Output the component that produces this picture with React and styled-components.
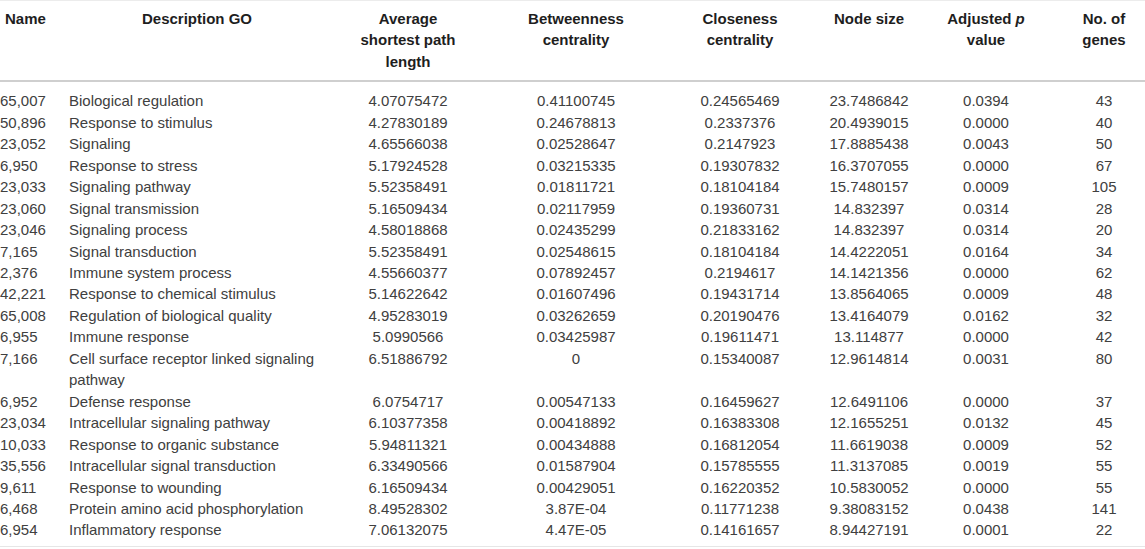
import React from 'react';
import styled, { createGlobalStyle } from 'styled-components';

const GlobalStyle = createGlobalStyle`
  html, body {
    margin: 0;
    padding: 0;
    background: #ffffff;
  }
  body {
    font-family: "Liberation Sans", Arial, Helvetica, sans-serif;
  }
`;

const columns = [
  { key: 'name', title: ['Name'], width: 65, align: 'left', headPad: '0 0 0 5px', cellPad: '0 0 0 0' },
  { key: 'desc', title: ['Description GO'], width: 264, align: 'left', headAlign: 'center', cellPad: '0 8px 0 4px' },
  { key: 'avg', title: ['Average', 'shortest path', 'length'], width: 158 },
  { key: 'btw', title: ['Betweenness', 'centrality'], width: 178 },
  { key: 'clo', title: ['Closeness', 'centrality'], width: 150 },
  { key: 'node', title: ['Node size'], width: 108 },
  { key: 'padj', title: ['Adjusted ', <i key="p">p</i>, 'value'], width: 126, inline: true },
  { key: 'genes', title: ['No. of', 'genes'], width: 96, headPad: '0 0 0 14px', cellPad: '0 0 0 14px' },
];

const rows = [
  ['65,007', 'Biological regulation', '4.07075472', '0.41100745', '0.24565469', '23.7486842', '0.0394', '43'],
  ['50,896', 'Response to stimulus', '4.27830189', '0.24678813', '0.2337376', '20.4939015', '0.0000', '40'],
  ['23,052', 'Signaling', '4.65566038', '0.02528647', '0.2147923', '17.8885438', '0.0043', '50'],
  ['6,950', 'Response to stress', '5.17924528', '0.03215335', '0.19307832', '16.3707055', '0.0000', '67'],
  ['23,033', 'Signaling pathway', '5.52358491', '0.01811721', '0.18104184', '15.7480157', '0.0009', '105'],
  ['23,060', 'Signal transmission', '5.16509434', '0.02117959', '0.19360731', '14.832397', '0.0314', '28'],
  ['23,046', 'Signaling process', '4.58018868', '0.02435299', '0.21833162', '14.832397', '0.0314', '20'],
  ['7,165', 'Signal transduction', '5.52358491', '0.02548615', '0.18104184', '14.4222051', '0.0164', '34'],
  ['2,376', 'Immune system process', '4.55660377', '0.07892457', '0.2194617', '14.1421356', '0.0000', '62'],
  ['42,221', 'Response to chemical stimulus', '5.14622642', '0.01607496', '0.19431714', '13.8564065', '0.0009', '48'],
  ['65,008', 'Regulation of biological quality', '4.95283019', '0.03262659', '0.20190476', '13.4164079', '0.0162', '32'],
  ['6,955', 'Immune response', '5.0990566', '0.03425987', '0.19611471', '13.114877', '0.0000', '42'],
  ['7,166', 'Cell surface receptor linked signaling pathway', '6.51886792', '0', '0.15340087', '12.9614814', '0.0031', '80'],
  ['6,952', 'Defense response', '6.0754717', '0.00547133', '0.16459627', '12.6491106', '0.0000', '37'],
  ['23,034', 'Intracellular signaling pathway', '6.10377358', '0.00418892', '0.16383308', '12.1655251', '0.0132', '45'],
  ['10,033', 'Response to organic substance', '5.94811321', '0.00434888', '0.16812054', '11.6619038', '0.0009', '52'],
  ['35,556', 'Intracellular signal transduction', '6.33490566', '0.01587904', '0.15785555', '11.3137085', '0.0019', '55'],
  ['9,611', 'Response to wounding', '6.16509434', '0.00429051', '0.16220352', '10.5830052', '0.0000', '55'],
  ['6,468', 'Protein amino acid phosphorylation', '8.49528302', '3.87E-04', '0.11771238', '9.38083152', '0.0438', '141'],
  ['6,954', 'Inflammatory response', '7.06132075', '4.47E-05', '0.14161657', '8.94427191', '0.0001', '22'],
];

const Table = styled.table`
  width: 1145px;
  table-layout: fixed;
  border-collapse: collapse;
  border-top: 1px solid #ececec;
  border-bottom: 1px solid #e6e6e6;
  font-size: 15px;
  line-height: 21.45px;
`;

const HeadRow = styled.tr`
  border-bottom: 2px solid #cfcfcf;
`;

const HeadCell = styled.th`
  padding: ${p => p.$pad || '0'};
  padding-top: 7px;
  padding-bottom: 8px;
  vertical-align: top;
  text-align: ${p => p.$align};
  font-weight: 700;
  color: #1e1e1e;
`;

const Cell = styled.td`
  padding: ${p => p.$pad || '0'};
  vertical-align: top;
  text-align: ${p => p.$align};
  color: #404040;
  tr:first-child > & {
    padding-top: 8px;
  }
  tr:last-child > & {
    padding-bottom: 5px;
  }
`;

function HeadTitle({ col }) {
  if (col.inline) {
    return (
      <>
        {col.title[0]}
        {col.title[1]}
        <br />
        {col.title[2]}
      </>
    );
  }
  return col.title.map((line, i) => (
    <React.Fragment key={i}>
      {i > 0 && <br />}
      {line}
    </React.Fragment>
  ));
}

export default function App() {
  return (
    <>
      <GlobalStyle />
      <Table>
        <colgroup>
          {columns.map(c => (
            <col key={c.key} style={{ width: c.width }} />
          ))}
        </colgroup>
        <thead>
          <HeadRow>
            {columns.map(c => (
              <HeadCell key={c.key} $align={c.headAlign || c.align || 'center'} $pad={c.headPad}>
                <HeadTitle col={c} />
              </HeadCell>
            ))}
          </HeadRow>
        </thead>
        <tbody>
          {rows.map(r => (
            <tr key={r[0] + r[1]}>
              {r.map((v, i) => (
                <Cell key={i} $align={columns[i].align || 'center'} $pad={columns[i].cellPad}>
                  {v}
                </Cell>
              ))}
            </tr>
          ))}
        </tbody>
      </Table>
    </>
  );
}
